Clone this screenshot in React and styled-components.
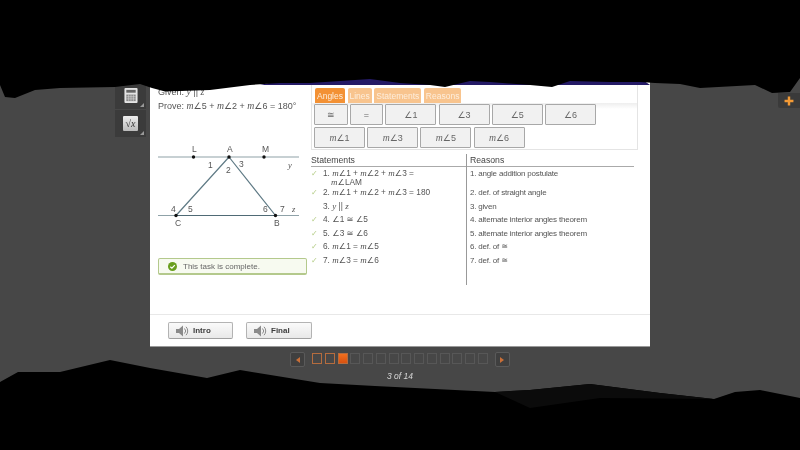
import React from "react";
import styled, { createGlobalStyle } from "styled-components";

const Global = createGlobalStyle`
  html, body { margin: 0; padding: 0; background: #000; }
  * { box-sizing: border-box; }
`;

const Screen = styled.div`
  position: relative;
  width: 800px;
  height: 450px;
  overflow: hidden;
  background: #474747;
  font-family: "Liberation Sans", "DejaVu Sans", sans-serif;
  color: #444;
  filter: blur(0.35px);
`;
const Stage = styled.div`
  display: flex;
  padding-top: 72px;
`;
const ToolRail = styled.div`
  width: 150px;
  padding: 10px 4px 0 0;
  display: flex;
  flex-direction: column;
  align-items: flex-end;
  gap: 1px;
`;
const ToolTile = styled.div`
  position: relative;
  width: 31px;
  height: 27px;
  background: #3b3b3b;
  display: flex;
  align-items: center;
  justify-content: center;
  &::after {
    content: "";
    position: absolute;
    right: 2px;
    bottom: 2px;
    border-left: 4px solid transparent;
    border-bottom: 4px solid #999;
  }
`;
const SqrtGlyph = styled.div`
  width: 15px;
  height: 15px;
  background: linear-gradient(#eee, #bbb);
  border-radius: 1px;
  color: #333;
  font: italic 10px/15px "Liberation Serif", serif;
  text-align: center;
`;
const Panel = styled.div`
  width: 500px;
  height: 275px;
  background: #fff;
  border-bottom: 1px solid #999;
  display: flex;
  flex-direction: column;
`;
const Main = styled.div`
  flex: 1;
  display: grid;
  grid-template-columns: 161px 327px;
  min-height: 0;
`;
const LeftCol = styled.div`
  padding: 13px 0 0 8px;
  display: flex;
  flex-direction: column;
`;
const Given = styled.div`
  font-size: 9px;
  line-height: 13px;
  color: #555;
  white-space: nowrap;
`;
const Ma = styled.span`
  font-family: "Liberation Serif", serif;
  font-style: italic;
  font-size: 1.08em;
`;
const Ang = styled.span`
  font-family: "DejaVu Sans", sans-serif;
  font-style: normal;
`;
const Diagram = styled.svg`
  display: block;
  margin-top: 29px;
  width: 145px;
  height: 90px;
`;
const Complete = styled.div`
  margin-top: 26px;
  width: 149px;
  height: 17px;
  border: 1px solid #b4c98c;
  border-bottom-width: 2px;
  border-radius: 2px;
  background: #f7faf0;
  display: flex;
  align-items: center;
  gap: 6px;
  padding-left: 9px;
  font-size: 8px;
  color: #666;
`;
const RightCol = styled.div`
  padding-top: 12px;
  display: flex;
  flex-direction: column;
`;
const Bank = styled.div`
  height: 66px;
  border: 1px solid #e4e4e4;
  border-top: none;
  padding: 4px 0 0 3px;
`;
const Tabs = styled.div`
  display: flex;
  gap: 2.500px;
  height: 15px;
`;
const Tab = styled.div`
  padding: 0 2px;
  border-radius: 2px 2px 0 0;
  background: ${(p) => (p.$on ? "#f39134" : "#f8c48e")};
  color: #fdeedd;
  font-size: 8.500px;
  line-height: 16px;
  text-align: center;
`;
const TileStrip = styled.div`
  margin-left: -3px;
  padding: 1px 0 0 2px;
  background: linear-gradient(#eeeeee, #fff 6px);
`;
const TileRow = styled.div`
  display: flex;
  gap: 2.200px;
  margin-bottom: 2px;
`;
const Tile = styled.div`
  width: ${(p) => p.$w}px;
  height: 21px;
  background: #f1f1f1;
  border: 1px solid #a8a8a8;
  border-radius: 1px;
  display: flex;
  align-items: center;
  justify-content: center;
  font-size: 9px;
  color: #666;
`;
const Proof = styled.div`
  position: relative;
  margin-top: 4px;
  display: grid;
  grid-template-columns: 155px 168px;
  height: 131px;
`;
const Divider = styled.div`
  position: absolute;
  left: 155px;
  top: 0;
  bottom: 0;
  width: 1px;
  background: #999;
`;
const Col = styled.div`
  display: flex;
  flex-direction: column;
`;
const Head = styled.div`
  height: 13px;
  border-bottom: 1px solid #aaa;
  font-size: 8.700px;
  line-height: 13px;
  color: #444;
  padding-left: ${(p) => p.$pad || 0}px;
`;
const Rows = styled.div`
  padding-top: 1px;
`;
const Row = styled.div`
  display: flex;
  font-size: 8px;
  line-height: 9px;
  color: #555;
  height: ${(p) => p.$h || 13.500}px;
  padding-top: 1px;
`;
const Check = styled.div`
  width: 12px;
  color: #b4cc86;
  font-size: 8px;
  line-height: 9px;
  flex: none;
`;
const StatementText = styled.div`
  width: 132px;
  font-size: 8.300px;
`;
const Indent = styled.span`
  margin-left: 8px;
`;
const ReasonRow = styled(Row)`
  padding-left: 4px;
  letter-spacing: -0.200px;
`;
const Footer = styled.div`
  height: 32px;
  border-top: 1px solid #e8e8e8;
  padding: 7px 0 0 18px;
  display: flex;
  gap: 13px;
`;
const AudioBtn = styled.div`
  width: ${(p) => p.$w}px;
  height: 17px;
  border: 1px solid #b3b3b3;
  border-bottom-color: #a0a0a0;
  border-radius: 2px;
  background: linear-gradient(#fafafa, #e8e8e8);
  display: flex;
  align-items: center;
  gap: 4px;
  padding-left: 7px;
  font-size: 8px;
  font-weight: 700;
  color: #3c3c3c;
`;
const RightRail = styled.div`
  flex: 1;
  padding: 21px 0 0 0;
  display: flex;
  justify-content: flex-end;
  align-items: flex-start;
`;
const PlusTile = styled.div`
  width: 22px;
  height: 15px;
  background: #3a3a3a;
  border-radius: 0 0 0 2px;
  display: flex;
  align-items: center;
  justify-content: center;
`;
const Pager = styled.div`
  display: flex;
  justify-content: center;
  align-items: flex-start;
  margin-top: 5px;
  gap: 7px;
`;
const Arrow = styled.div`
  width: 15px;
  height: 15px;
  border: 1px solid #5a5a5a;
  border-radius: 2px;
  background: #3f3f3f;
  display: flex;
  align-items: center;
  justify-content: center;
  &::before {
    content: "";
    border-top: 3px solid transparent;
    border-bottom: 3px solid transparent;
    ${(p) => (p.$next ? "border-left" : "border-right")}: 4px solid #c96f38;
  }
`;
const Squares = styled.div`
  display: flex;
  gap: 2.750px;
  margin-top: 1px;
`;
const Square = styled.div`
  width: 10px;
  height: 11px;
  border: 1px solid
    ${(p) => (p.$state === "todo" ? "#575757" : "#b56c3e")};
  background: ${(p) =>
    p.$state === "now" ? "linear-gradient(#f2701e, #d8500f)" : "transparent"};
`;
const PageLabel = styled.div`
  margin-top: 4px;
  text-align: center;
  font-size: 8.500px;
  font-style: italic;
  color: #d8d8d8;
`;
const Redaction = styled.svg`
  position: absolute;
  inset: 0;
  width: 800px;
  height: 450px;
  pointer-events: none;
`;

const A = ({ n }) => (
  <>
    <Ang>∠</Ang>
    {n}
  </>
);
const MA = ({ n }) => (
  <>
    <Ma>m</Ma>
    <Ang>∠</Ang>
    {n}
  </>
);

const statements = [
  { ok: true, h: 19, t: <>1. <MA n="1" /> + <MA n="2" /> + <MA n="3" /> = <br /><Indent><MA n="LAM" /></Indent></> },
  { ok: true, t: <>2. <MA n="1" /> + <MA n="2" /> + <MA n="3" /> = 180</> },
  { ok: false, t: <>3. <Ma>y</Ma> || <Ma>z</Ma></> },
  { ok: true, t: <>4. <A n="1" /> ≅ <A n="5" /></> },
  { ok: true, t: <>5. <A n="3" /> ≅ <A n="6" /></> },
  { ok: true, t: <>6. <MA n="1" /> = <MA n="5" /></> },
  { ok: true, t: <>7. <MA n="3" /> = <MA n="6" /></> },
];
const reasons = [
  { h: 19, t: "1. angle addition postulate" },
  { t: "2. def. of straight angle" },
  { t: "3. given" },
  { t: "4. alternate interior angles theorem" },
  { t: "5. alternate interior angles theorem" },
  { t: "6. def. of ≅" },
  { t: "7. def. of ≅" },
];

const Speaker = () => (
  <svg width="13" height="12" viewBox="0 0 13 12">
    <path d="M0 4h3l4-3.500v11L3 8H0z" fill="#8a8a8a" />
    <path d="M8.500 3.500a3.500 3.500 0 0 1 0 5M10 1.800a6 6 0 0 1 0 8.400" fill="none" stroke="#8a8a8a" strokeWidth="1" />
  </svg>
);

const Geometry = () => (
  <Diagram viewBox="0 -7 145 90">
    <g stroke="#8fa2a8" strokeWidth="1.200" fill="none">
      <path d="M0 8H141M0 66.500H141" />
      <path d="M71 8L18 66.500M71 8L117.500 66.500" stroke="#5f7a85" />
      <path d="M18 66.500H117.500" stroke="#4f6a75" />
    </g>
    <g fill="#111">
      <circle cx="35.500" cy="8" r="1.700" />
      <circle cx="71" cy="8" r="1.700" />
      <circle cx="106" cy="8" r="1.700" />
      <circle cx="18" cy="66.500" r="1.700" />
      <circle cx="117.500" cy="66.500" r="1.700" />
    </g>
    <g fill="#555" fontSize="8.500" fontFamily="Liberation Sans, sans-serif">
      <text x="34" y="3">L</text>
      <text x="69" y="3">A</text>
      <text x="104" y="3">M</text>
      <text x="50" y="19">1</text>
      <text x="68" y="24">2</text>
      <text x="81" y="18">3</text>
      <text x="13" y="63">4</text>
      <text x="30" y="63">5</text>
      <text x="105" y="63">6</text>
      <text x="122" y="63">7</text>
      <text x="17" y="77">C</text>
      <text x="116" y="77">B</text>
      <text x="130" y="19" fontStyle="italic" fontFamily="Liberation Serif, serif">y</text>
      <text x="134" y="63" fontStyle="italic" fontFamily="Liberation Serif, serif">z</text>
    </g>
  </Diagram>
);

export default function App() {
  return (
    <Screen>
      <Global />
      <Stage>
        <ToolRail>
          <ToolTile>
            <svg width="14" height="15" viewBox="0 0 14 16">
              <rect width="14" height="16" rx="1" fill="#e4e4e4" />
              <rect x="2" y="2" width="10" height="3" fill="#666" />
              <path d="M2 7h10v7H2z" fill="#888" />
              <path d="M2 9.300h10M2 11.600h10M4.500 7v7M7 7v7M9.500 7v7" stroke="#ddd" strokeWidth=".6" />
            </svg>
          </ToolTile>
          <ToolTile>
            <SqrtGlyph>√x</SqrtGlyph>
          </ToolTile>
        </ToolRail>
        <Panel>
          <Main>
            <LeftCol>
              <Given>Given: <Ma>y</Ma> || <Ma>z</Ma></Given>
              <Given>Prove: <MA n="5" /> + <MA n="2" /> + <MA n="6" /> = 180°</Given>
              <Geometry />
              <Complete>
                <svg width="9" height="9" viewBox="0 0 9 9">
                  <circle cx="4.500" cy="4.500" r="4.500" fill="#6a9f1e" />
                  <path d="M2.300 4.700l1.600 1.500 2.900-3" fill="none" stroke="#fff" strokeWidth="1.200" />
                </svg>
                This task is complete.
              </Complete>
            </LeftCol>
            <RightCol>
              <Bank>
                <Tabs>
                  <Tab $on>Angles</Tab>
                  <Tab>Lines</Tab>
                  <Tab>Statements</Tab>
                  <Tab>Reasons</Tab>
                </Tabs>
                <TileStrip>
                  <TileRow>
                    <Tile $w={33.500}>≅</Tile>
                    <Tile $w={33.500}>=</Tile>
                    {["1", "3", "5", "6"].map((n) => (
                      <Tile key={n} $w={51}><A n={n} /></Tile>
                    ))}
                  </TileRow>
                  <TileRow>
                    {["1", "3", "5", "6"].map((n) => (
                      <Tile key={n} $w={51}><MA n={n} /></Tile>
                    ))}
                  </TileRow>
                </TileStrip>
              </Bank>
              <Proof>
                <Divider />
                <Col>
                  <Head>Statements</Head>
                  <Rows>
                    {statements.map((s, i) => (
                      <Row key={i} $h={s.h}>
                        <Check>{s.ok ? "✓" : ""}</Check>
                        <StatementText>{s.t}</StatementText>
                      </Row>
                    ))}
                  </Rows>
                </Col>
                <Col>
                  <Head $pad={4}>Reasons</Head>
                  <Rows>
                    {reasons.map((r, i) => (
                      <ReasonRow key={i} $h={r.h}>{r.t}</ReasonRow>
                    ))}
                  </Rows>
                </Col>
              </Proof>
            </RightCol>
          </Main>
          <Footer>
            <AudioBtn $w={65}><Speaker /> Intro</AudioBtn>
            <AudioBtn $w={66}><Speaker /> Final</AudioBtn>
          </Footer>
        </Panel>
        <RightRail>
          <PlusTile>
            <svg width="10" height="10" viewBox="0 0 9 9">
              <path d="M4.500 .5v8M.5 4.500h8" stroke="#f39a35" strokeWidth="2.200" />
            </svg>
          </PlusTile>
        </RightRail>
      </Stage>
      <Pager>
        <Arrow />
        <Squares>
          {Array.from({ length: 14 }, (_, i) => (
            <Square key={i} $state={i < 2 ? "done" : i === 2 ? "now" : "todo"} />
          ))}
        </Squares>
        <Arrow $next />
      </Pager>
      <PageLabel>3 of 14</PageLabel>
      <Redaction viewBox="0 0 800 450">
        <path d="M260 85L290 78L640 78L650 85Z" fill="#241a66" />
        <path d="M0 0H800V78L790 92L772 93L755 85L700 88L680 84L655 83L640 82L610 82L570 81L552 87L530 85L490 82L470 81L445 87L430 85L400 83L370 79L340 81L310 83L280 83L250 85L210 90L165 91.500L152 88L140 84L115 87L60 88L35 90L15 98L5 97L0 85Z" fill="#000" />
        <path d="M0 450V382L18 372L60 372L85 366L110 360L150 368L207 378L240 370L320 383L375 386L495 392L530 390L590 384L660 393L714 399L735 392L760 390L800 398V450Z" fill="#000" />
        <path d="M495 392L530 408L600 398L714 399L660 393L590 384L530 390Z" fill="#0b0b0b" />
      </Redaction>
    </Screen>
  );
}
